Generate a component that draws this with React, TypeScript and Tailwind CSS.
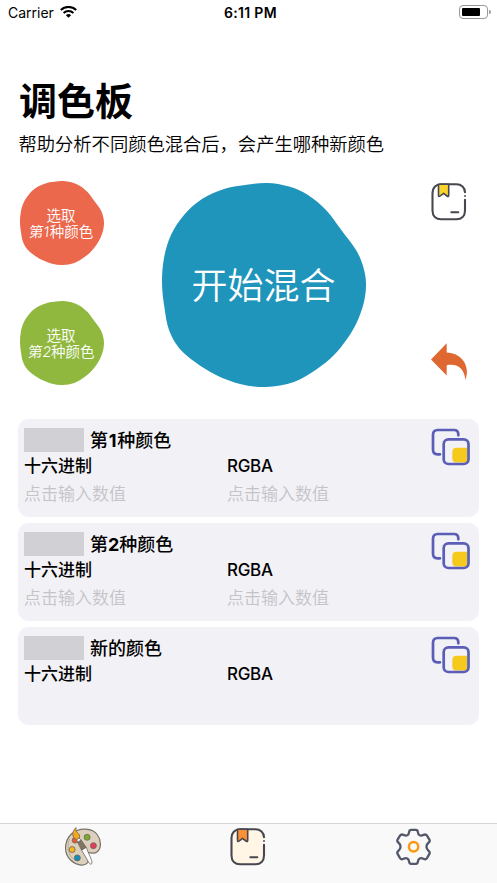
import { useState } from "react";
import clsx from "clsx";

type TabKey = "palette" | "book" | "settings";

const swatches = [
  { id: "first", title: <>第<b className="mx-[0.8px] font-bold">1</b>种颜色</>, editable: true },
  { id: "second", title: <>第<b className="font-bold">2</b>种颜色</>, editable: true },
  { id: "mixed", title: <>新的颜色</>, editable: false }
];

const blobPoints = [
  [105, 0],
  [127, 3.5],
  [146, 12],
  [164, 27],
  [180, 48],
  [194, 67],
  [201, 83],
  [204, 100],
  [202, 119],
  [195, 139],
  [185, 156],
  [172, 172],
  [155, 186],
  [132, 199],
  [104, 204],
  [78, 201],
  [54, 192],
  [33, 179],
  [17, 165],
  [7, 147],
  [2.5, 125],
  [0, 100],
  [2, 75],
  [9, 52],
  [22, 32],
  [40, 16],
  [62, 6],
  [83, 2]
];

// closed smooth curve through the points
function smoothPath(points: number[][]) {
  const n = points.length;
  const at = (i: number) => points[(i + n) % n];
  let d = `M${points[0].join(" ")}`;
  for (let i = 0; i < n; i++) {
    const [a, b, c, e] = [at(i - 1), at(i), at(i + 1), at(i + 2)];
    d += ` C${b[0] + (c[0] - a[0]) / 6} ${b[1] + (c[1] - a[1]) / 6} ${c[0] - (e[0] - b[0]) / 6} ${c[1] - (e[1] - b[1]) / 6} ${c[0]} ${c[1]}`;
  }
  return `${d}Z`;
}

const BLOB = smoothPath(blobPoints);

function Blob({ className, color, children }: { className: string; color: string; children: React.ReactNode }) {
  return (
    <button type="button" className={clsx("relative flex shrink-0 items-center justify-center whitespace-nowrap text-white", className)}>
      <svg viewBox="0 0 204 204" className={clsx("absolute inset-0 h-full w-full overflow-visible", color)}>
        <path d={BLOB} fill="currentColor" />
      </svg>
      <span className="relative">{children}</span>
    </button>
  );
}

function BookIcon({ page, mark }: { page: string; mark: string }) {
  return (
    <svg width="36" height="38" viewBox="0 0 36 38" fill="none" strokeLinecap="round" strokeLinejoin="round">
      <rect x="1.5" y="1.3" width="32.5" height="35" rx="9" fill={page} />
      <path
        d="M34 9.3 C34 4.5 30.2 1.3 25.5 1.3 H10 C4.7 1.3 1.5 5 1.5 10 V27.5 C1.5 33 5 36.3 10 36.3 H25.5 C30.5 36.3 34 33 34 27.5 V16.8"
        stroke="#474750"
        strokeWidth="2.1"
      />
      <path d="M34 13 V13.1" stroke="#474750" strokeWidth="1.9" />
      <path d="M7.5 1.3 V12.2 Q7.5 14.4 9.2 13 L12.6 10.3 L16 13 Q17.7 14.4 17.7 12.2 V1.3 Z" fill={mark} stroke="#474750" strokeWidth="1.6" />
      <path d="M20.3 29.3 H27.3" stroke="#474750" strokeWidth="2" />
    </svg>
  );
}

function CopyIcon() {
  return (
    <svg width="39" height="39" viewBox="0 0 39 39" fill="none" stroke="#5b5eb6" strokeWidth="2.7" strokeLinecap="round">
      <path d="M27.3 7.3 V6.3 Q27.3 2 23 2 H6.8 Q2 2 2 6.8 V21.8 Q2 26.3 6.5 26.3 H9" />
      <path d="M21.3 24 Q21.3 19.7 25.6 19.7 H36 V34.5 H25.6 Q21.3 34.5 21.3 30.2 Z" fill="#f5ca1d" stroke="none" />
      <rect x="12.7" y="11.3" width="24.8" height="24.7" rx="4.8" />
    </svg>
  );
}

function UndoIcon() {
  return (
    <svg width="36" height="38" viewBox="0 0 36 38">
      <path d="M0 16.5 L15.7 0.2 V9.6 C29 10 40 21 34.4 37 C33.5 26.5 27.5 20 15.7 22.2 V32.5 Z" fill="#df6831" />
    </svg>
  );
}

function PaletteIcon() {
  return (
    <svg width="38" height="40" viewBox="0 0 38 40" fill="none" className="-mt-px">
      <path
        d="M13 3.5 C20 1 29 1.7 33.5 8 C37.5 13.5 37.4 21.5 33.2 24.7 C29 28 25.8 24.5 23.7 26 C21.4 27.8 25.8 32 23.7 35.5 C20.5 40 11.5 38 6.5 33 C-1 25.5 -.7 9.5 13 3.5Z"
        fill="#dcd0bc"
        stroke="#77736b"
        strokeWidth="1.2"
      />
      <path d="M5.5 12 C2.5 19 4 28 10.5 33" stroke="#b8ad9b" />
      <g stroke="#69645d" strokeWidth="0.8">
        <circle cx="23.1" cy="10.3" r="3" fill="#7aad2d" />
        <circle cx="29.4" cy="18.7" r="3" fill="#e43c5b" />
        <circle cx="8.1" cy="22.6" r="3" fill="#f6b51b" />
        <circle cx="13.3" cy="30.9" r="3" fill="#148eb8" />
        <circle cx="11" cy="13.3" r="2.8" fill="#e95a32" />
        <path d="M17.5 23 L22.2 20.3 L27.7 33.5 Q28.8 37.2 26.8 37.3 Q25.5 37.1 24.4 34.7Z" fill="#fff" />
        <path d="M13.6 15.3 L17.2 13.1 L22.2 20.3 L17.5 23Z" fill="#827363" />
        <path d="M12 .6 C8.2 4 7 10 12.6 12.7 C16 12 17 8.6 13.4 5.5 C12 4.2 11.8 2.5 12 .6Z" fill="#f4a817" />
        <path d="M12.6 12.7 L15.1 11 L17.2 13.1 L13.6 15.3Z" fill="#eee" />
      </g>
    </svg>
  );
}

function GearIcon() {
  return (
    <svg width="36" height="38" viewBox="0 0 36 38" fill="none">
      <path
        d="M15.2 1.8 H19.8 Q21.6 1.8 21.8 3.8 C22.3 7.4 24.4 8.3 27.5 6.9 Q29.8 5.8 31 7.6 L33.4 11.6 Q34.3 13.3 32.7 14.5 C29.7 17 29.7 20.5 32.7 23 Q34.3 24.2 33.4 25.9 L31 30.1 Q29.8 31.9 27.5 30.8 C24.4 29.4 22.3 30.3 21.8 33.9 Q21.6 35.9 19.8 35.9 H15.2 Q13.4 35.9 13.2 33.9 C12.7 30.3 10.6 29.4 7.5 30.8 Q5.2 31.9 4 30.1 L1.6 25.9 Q.7 24.2 2.3 23 C5.3 20.5 5.3 17 2.3 14.5 Q.7 13.3 1.6 11.6 L4 7.6 Q5.2 5.8 7.5 6.9 C10.6 8.3 12.7 7.4 13.2 3.8 Q13.4 1.8 15.2 1.8Z"
        stroke="#52576a"
        strokeWidth="2.3"
      />
      <circle cx="17.6" cy="18.8" r="4.7" stroke="#ff9811" strokeWidth="2.5" />
    </svg>
  );
}

function StatusBar() {
  return (
    <header className="flex h-[26px] items-center justify-between pl-2 pr-[6px] text-[14px]">
      <div className="flex w-[150px] items-center gap-[6px]">
        <span className="-mt-[2px] w-[47px]">Carrier</span>
        <svg width="17" height="12" viewBox="0 0 17 12" className="-ml-px -mt-[2px]" fill="none" stroke="#000" strokeWidth="2.1">
          <path d="M.8 4 C5 -.1 12 -.1 16.2 4" />
          <path d="M3.6 6.9 C6.3 4.3 10.7 4.3 13.4 6.9" />
          <path d="M8.5 11.8 L5.9 9.2 Q8.5 7 11.1 9.2Z" fill="#000" stroke="none" />
        </svg>
      </div>
      <div className="-mt-[2px] pl-[2px] font-semibold tracking-[0.3px]">6:11 PM</div>
      <div className="flex w-[150px] items-center justify-end gap-px pb-[2px]">
        <div className="h-[14px] w-[29px] rounded-[4px] border border-[#999] p-[2px]">
          <div className="h-[8px] w-[18px] rounded-[1px] bg-black" />
        </div>
        <div className="h-[4px] w-[2px] rounded-r-full bg-[#999]" />
      </div>
    </header>
  );
}

function ColorCard({ title, editable }: { title: React.ReactNode; editable: boolean }) {
  return (
    <section className="flex h-[98px] justify-between rounded-[10px] bg-[#f2f1f6] pl-[6px] pr-[9px] pt-[9px]">
      <div className="flex-1">
        <div className="flex h-[25px] items-center gap-[6px]">
          <div className="-mt-[2px] h-6 w-[60px] bg-[#d1d0d5]" />
          <h2 className="text-[18px] font-medium leading-[25px]">{title}</h2>
        </div>
        <div className="grid grid-cols-[203px_1fr] text-[17px] leading-[26px]">
          <span className="font-medium">十六进制</span>
          <span className="font-medium tracking-[-0.3px]">RGBA</span>
          {editable ? (
            <>
              <input className="h-[30px] w-[190px] bg-transparent font-[350] outline-none placeholder:text-[#c4c4c8]" placeholder="点击输入数值" />
              <input className="h-[30px] w-[160px] bg-transparent font-[350] outline-none placeholder:text-[#c4c4c8]" placeholder="点击输入数值" />
            </>
          ) : null}
        </div>
      </div>
      <button type="button" className="h-[39px] w-[39px]">
        <CopyIcon />
      </button>
    </section>
  );
}

export default function App() {
  const [tab, setTab] = useState<TabKey>("palette");

  return (
    <div className="flex h-[883px] w-[497px] flex-col overflow-hidden bg-white font-['Inter','Noto_Sans_CJK_SC',sans-serif] text-black">
      <StatusBar />

      <main className="flex-1 px-[18px]">
        <h1 className="mt-[47px] pl-px text-[38px] font-bold leading-[56px]">调色板</h1>
        <p className="mt-[2px] whitespace-nowrap pl-[0.5px] text-[18.3px] font-[350] leading-[27px]">帮助分析不同颜色混合后，会产生哪种新颜色</p>

        <div className="mt-[23px] flex h-[206px] justify-between pl-[2px] pr-[12px]">
          <div className="flex flex-col gap-[36px] text-[14.5px] font-[350] leading-[16px]">
            <Blob className="h-[84px] w-[84px] pr-[2px] pt-[2px]" color="text-[#eb684d]">
              选取
              <br />
              <span className="mr-px inline-block -skew-x-6">第1</span>种颜色
            </Blob>
            <Blob className="h-[84px] w-[84px] pr-[2px] pt-[2px]" color="text-[#90b83e]">
              选取
              <br />
              <span className="inline-block -skew-x-6">第2</span>种颜色
            </Blob>
          </div>
          <Blob className="-ml-[8px] mt-[2px] h-[204px] w-[204px] pt-px text-[36px] font-[350]" color="text-[#2095bb]">
            开始混合
          </Blob>
          <div className="flex flex-col justify-between pb-[6px] pt-[2px]">
            <button type="button">
              <BookIcon page="#ffffff" mark="#fad32d" />
            </button>
            <button type="button">
              <UndoIcon />
            </button>
          </div>
        </div>

        <div className="mt-[32px] flex flex-col gap-[6px]">
          {swatches.map((item) => (
            <ColorCard key={item.id} title={item.title} editable={item.editable} />
          ))}
        </div>
      </main>

      <nav className="grid h-[60px] grid-cols-3 border-t border-[#d5d5d5] bg-[#f9f9f9]">
        {(["palette", "book", "settings"] as TabKey[]).map((key) => (
          <button key={key} type="button" aria-pressed={tab === key} onClick={() => setTab(key)} className="flex justify-center pt-[4px]">
            {key === "palette" ? <PaletteIcon /> : null}
            {key === "book" ? <BookIcon page="#fff6e6" mark="#fb9136" /> : null}
            {key === "settings" ? <GearIcon /> : null}
          </button>
        ))}
      </nav>
    </div>
  );
}
